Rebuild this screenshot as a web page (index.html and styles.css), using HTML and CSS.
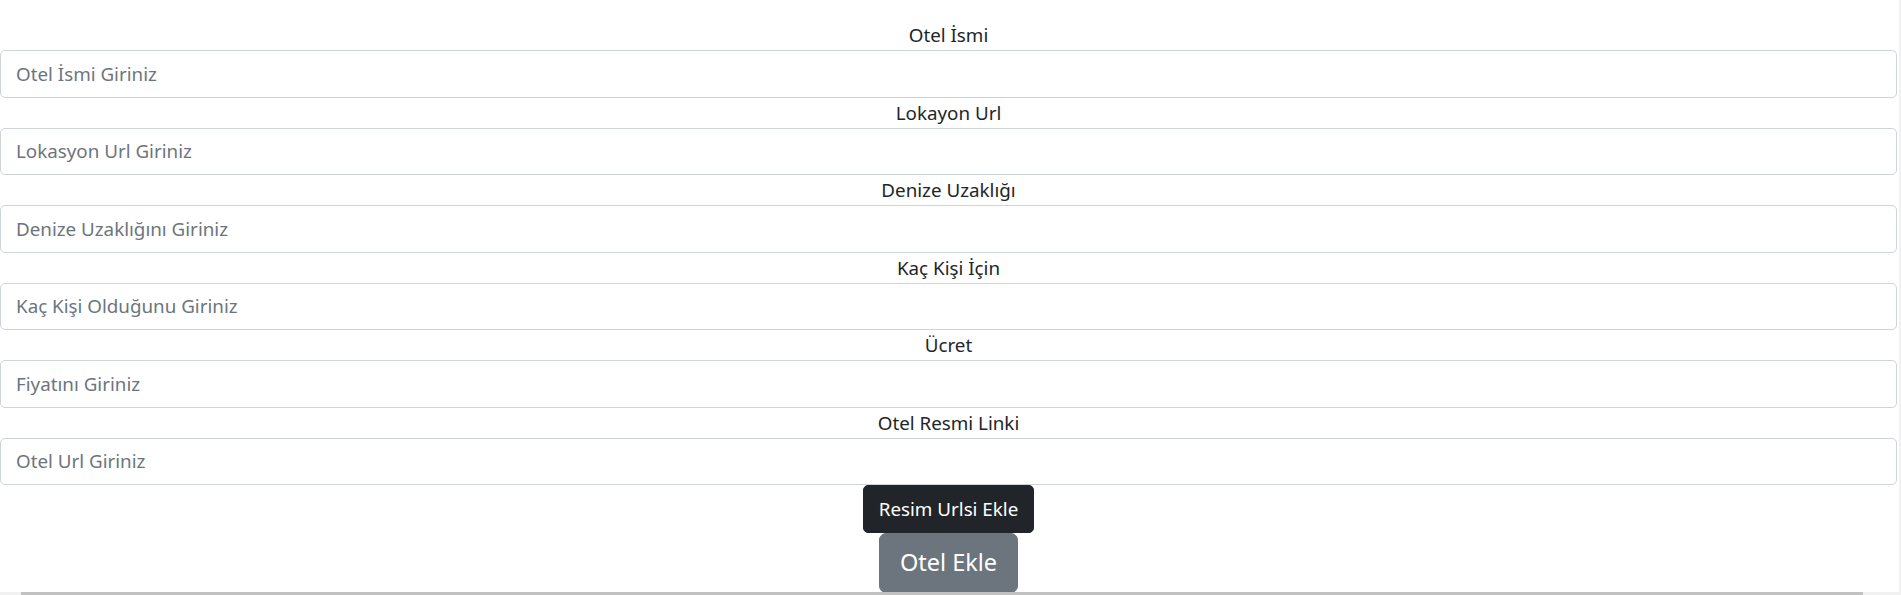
FILE: index.html
```html
<!DOCTYPE html>
<html lang="tr">
<head>
<meta charset="utf-8">
<title>Otel Ekle</title>
<link rel="stylesheet" href="styles.css">
</head>
<body>
<div class="page">
  <form class="form">
    <div class="group">
      <label class="label">Otel İsmi</label>
      <input class="control" type="text" placeholder="Otel İsmi Giriniz">
    </div>
    <div class="group">
      <label class="label">Lokayon Url</label>
      <input class="control" type="text" placeholder="Lokasyon Url Giriniz">
    </div>
    <div class="group">
      <label class="label">Denize Uzaklığı</label>
      <input class="control" type="text" placeholder="Denize Uzaklığını Giriniz">
    </div>
    <div class="group">
      <label class="label">Kaç Kişi İçin</label>
      <input class="control" type="text" placeholder="Kaç Kişi Olduğunu Giriniz">
    </div>
    <div class="group">
      <label class="label">Ücret</label>
      <input class="control" type="text" placeholder="Fiyatını Giriniz">
    </div>
    <div class="group">
      <label class="label">Otel Resmi Linki</label>
      <input class="control" type="text" placeholder="Otel Url Giriniz">
    </div>
    <div class="actions">
      <button type="button" class="btn btn-dark">Resim Urlsi Ekle</button>
      <button type="button" class="btn btn-lg btn-secondary">Otel Ekle</button>
    </div>
  </form>
  <div class="vscroll"></div>
</div>
<div class="hscroll"><div class="hthumb"></div></div>
</body>
</html>
```
FILE: styles.css
```css
html, body {
  margin: 0;
  padding: 0;
  background: #fff;
  overflow: hidden;
}
body {
  font-family: "Segoe UI", "Noto Sans", "Open Sans", sans-serif;
  color: #212529;
}
.page {
  display: flex;
  width: 1901px;
}
.form {
  width: 1897px;
  padding-top: 20px;
  display: flex;
  flex-direction: column;
}
.vscroll {
  width: 2px;
  margin-left: 2px;
  background: #f1f1f1;
  height: 595px;
}
.group {
  display: flex;
  flex-direction: column;
}
.label {
  display: block;
  text-align: center;
  font-size: 18.8px;
  line-height: 30px;
  height: 30px;
}
.control {
  box-sizing: border-box;
  width: 100%;
  height: 47.5px;
  margin: 0;
  padding: 7.5px 15px;
  border: 1.25px solid #ced4da;
  border-radius: 5px;
  font-family: inherit;
  font-size: 18.8px;
  line-height: 30px;
  color: #495057;
  background: #fff;
  outline: none;
}
.control::placeholder {
  color: #6c757d;
  opacity: 1;
}
.actions {
  display: flex;
  flex-direction: column;
  align-items: center;
}
.btn {
  box-sizing: border-box;
  font-family: inherit;
  border: 1.25px solid transparent;
  border-radius: 5px;
  color: #fff;
  cursor: pointer;
  margin: 0;
}
.btn-dark {
  background: #212529;
  border-color: #212529;
  font-size: 18.8px;
  line-height: 30px;
  height: 47.5px;
  padding: 7.5px 15px;
}
.btn-lg {
  font-size: 23.5px;
  line-height: 37.5px;
  height: 60px;
  padding: 10px 20px;
  border-radius: 7px;
}
.btn-secondary {
  background: #6c757d;
  border-color: #6c757d;
}
.hscroll {
  position: fixed;
  left: 0;
  bottom: 0;
  width: 1899px;
  height: 3px;
  background: #f1f1f1;
}
.hthumb {
  margin-left: 21px;
  width: 1842px;
  height: 3px;
  background: #c1c1c1;
}
```
